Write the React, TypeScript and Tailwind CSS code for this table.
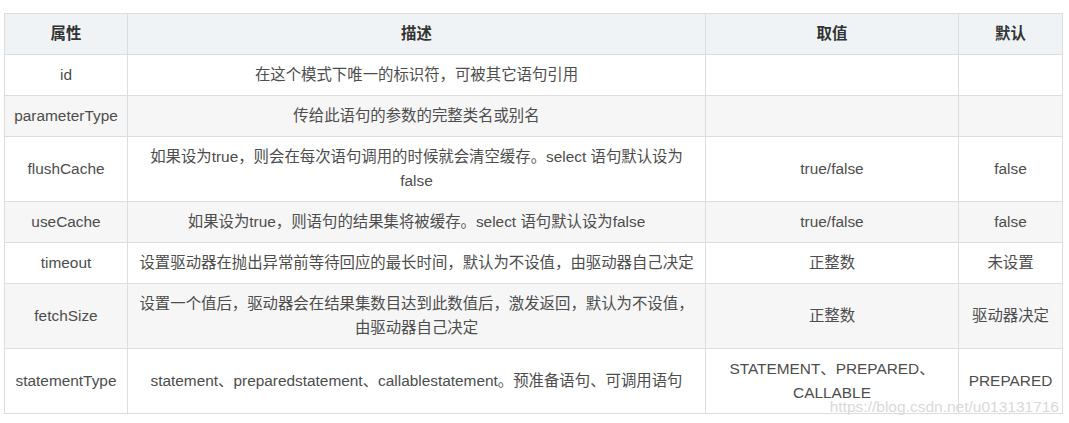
import {ReactNode} from "react"

type Row = {
  name: string
  desc: ReactNode
  value?: ReactNode
  fallback?: string
}

const rows: Row[] = [
  {name: "id", desc: "在这个模式下唯一的标识符，可被其它语句引用"},
  {name: "parameterType", desc: "传给此语句的参数的完整类名或别名"},
  {
    name: "flushCache",
    desc: (
      <>
        如果设为true，则会在每次语句调用的时候就会清空缓存。select 语句默认设为
        <br />
        false
      </>
    ),
    value: "true/false",
    fallback: "false",
  },
  {
    name: "useCache",
    desc: "如果设为true，则语句的结果集将被缓存。select 语句默认设为false",
    value: "true/false",
    fallback: "false",
  },
  {
    name: "timeout",
    desc: "设置驱动器在抛出异常前等待回应的最长时间，默认为不设值，由驱动器自己决定",
    value: "正整数",
    fallback: "未设置",
  },
  {
    name: "fetchSize",
    desc: (
      <>
        设置一个值后，驱动器会在结果集数目达到此数值后，激发返回，默认为不设值，
        <br />
        由驱动器自己决定
      </>
    ),
    value: "正整数",
    fallback: "驱动器决定",
  },
  {
    name: "statementType",
    desc: "statement、preparedstatement、callablestatement。预准备语句、可调用语句",
    value: (
      <>
        STATEMENT、PREPARED、
        <br />
        CALLABLE
      </>
    ),
    fallback: "PREPARED",
  },
]

const cell = "border border-[#dddddd] px-2 py-2 text-center align-middle"

const App = () => {
  return (
    <div className="min-h-[423px] bg-white pt-[13px] pl-1 font-['Liberation_Sans','Noto_Sans_CJK_SC',sans-serif] text-[15.4px] leading-6 text-[#4d4d4d]">
      <div className="relative w-[1058px]">
        <table className="w-[1058px] table-fixed border-collapse">
          <colgroup>
            <col className="w-[123px]" />
            <col className="w-[578px]" />
            <col className="w-[253px]" />
            <col className="w-[104px]" />
          </colgroup>
          <thead>
            <tr className="bg-[#eff3f5] font-bold text-[#333333]">
              <th className={cell}>属性</th>
              <th className={cell}>描述</th>
              <th className={cell}>取值</th>
              <th className={cell}>默认</th>
            </tr>
          </thead>
          <tbody>
            {rows.map((row, i) => (
              <tr key={row.name} className={i % 2 === 1 ? "bg-[#f6f6f6]" : "bg-white"}>
                <td className={cell}>{row.name}</td>
                <td className={cell}>{row.desc}</td>
                <td className={cell}>{row.value}</td>
                <td className={cell}>{row.fallback}</td>
              </tr>
            ))}
          </tbody>
        </table>
        <span className="pointer-events-none absolute right-[3px] bottom-0 font-['Liberation_Sans',sans-serif] text-[15.5px] leading-none text-[#d9d9d9]">
          https://blog.csdn.net/u013131716
        </span>
      </div>
    </div>
  )
}

export default App
